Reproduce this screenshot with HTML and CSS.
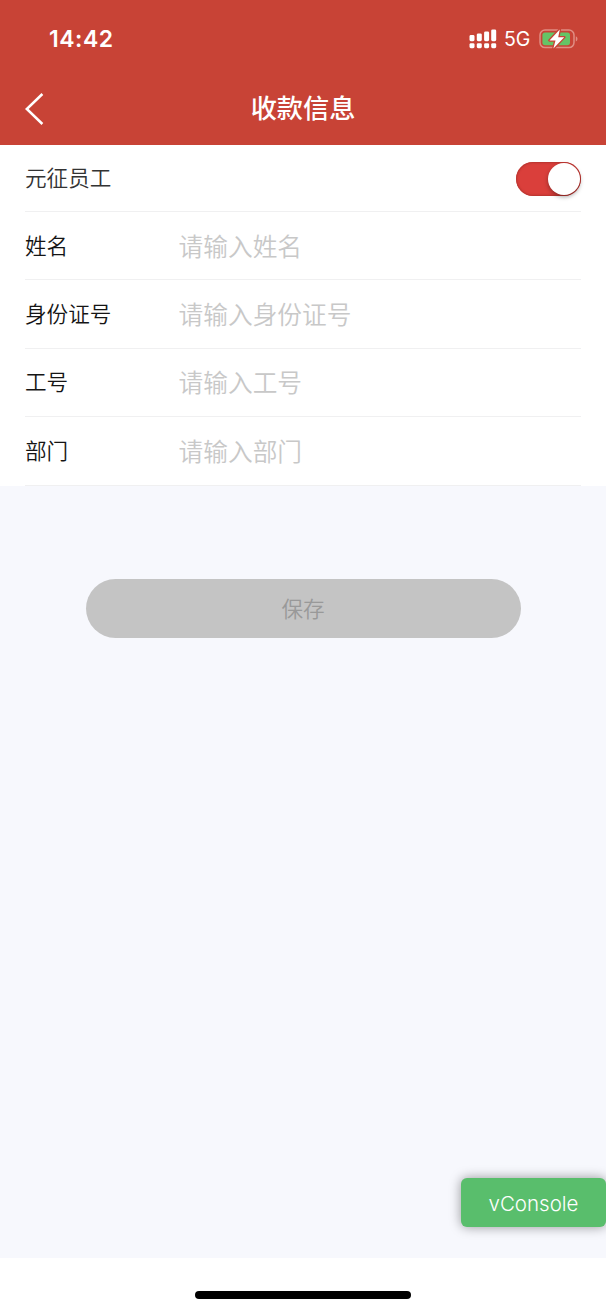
FILE: index.html
```html
<!DOCTYPE html>
<html lang="zh-CN">
<head>
    <meta charset="UTF-8">
    <meta name="viewport" content="width=device-width, initial-scale=1.0">
    <title>收款信息</title>
    <link rel="stylesheet" href="styles.css">
</head>
<body>

    <header class="header">
        <div class="status-bar">
            <span class="time">14:42</span>
            <div class="status-icons">
                <svg class="signal" width="28" height="20" viewBox="0 0 28 20" fill="#fff">
                    <rect x="0.5" y="6" width="5" height="6.2" rx="1.4"/>
                    <rect x="7.8" y="4.4" width="5" height="7.8" rx="1.4"/>
                    <rect x="15.1" y="2.4" width="5" height="9.8" rx="1.4"/>
                    <rect x="22.2" y="0.4" width="5" height="11.8" rx="1.4"/>
                    <rect x="0.5" y="14.2" width="5" height="5" rx="1.4"/>
                    <rect x="7.8" y="14.2" width="5" height="5" rx="1.4"/>
                    <rect x="15.1" y="14.2" width="5" height="5" rx="1.4"/>
                    <rect x="22.2" y="14.2" width="5" height="5" rx="1.4"/>
                </svg>
                <span class="network">5G</span>
                <svg class="battery" width="40" height="22" viewBox="0 0 40 22">
                    <rect x="1" y="2" width="34" height="17.6" rx="5" fill="none" stroke="#e08d83" stroke-width="1.5"/>
                    <path d="M36.8 8.2c2.2.8 2.2 4.4 0 5.2z" fill="#e08d83"/>
                    <rect x="3.4" y="4.4" width="27.6" height="12.8" rx="2.6" fill="#65c466"/>
                    <path d="M20.8 1.5L10.5 12.4h6L14.4 20.6 25.2 9.2h-6z" fill="#fff" stroke="#c84336" stroke-width="2.6" stroke-linejoin="round" paint-order="stroke"/>
                </svg>
            </div>
        </div>
        <div class="nav-bar">
            <button class="back-btn" aria-label="返回">
                <svg width="20" height="34" viewBox="0 0 20 34" fill="none" stroke="#fff" stroke-width="2.5">
                    <path d="M18.4 2L2.8 17 18.4 32"/>
                </svg>
            </button>
            <h1>收款信息</h1>
        </div>
    </header>

    <main class="content">
        <form class="form">
            <div class="row row-switch">
                <span class="label">元征员工</span>
                <label class="switch">
                    <input type="checkbox" checked aria-label="元征员工">
                    <span class="knob"></span>
                </label>
            </div>
            <div class="row">
                <label class="label" for="name">姓名</label>
                <input class="field" type="text" id="name" placeholder="请输入姓名">
            </div>
            <div class="row">
                <label class="label" for="idCard">身份证号</label>
                <input class="field" type="text" id="idCard" placeholder="请输入身份证号">
            </div>
            <div class="row">
                <label class="label" for="jobNumber">工号</label>
                <input class="field" type="text" id="jobNumber" placeholder="请输入工号">
            </div>
            <div class="row">
                <label class="label" for="department">部门</label>
                <input class="field" type="text" id="department" placeholder="请输入部门">
            </div>
        </form>

        <button class="save-btn" disabled>保存</button>
    </main>

    <footer class="home-area">
        <div class="home-indicator"></div>
    </footer>

    <button class="vconsole-btn">vConsole</button>

</body>
</html>
```
FILE: styles.css
```css
* {
    box-sizing: border-box;
}

body {
    display: flex;
    flex-direction: column;
    height: 1311px;
    margin: 0;
    overflow: hidden;
    font-family: Inter, "Noto Sans CJK SC", sans-serif;
    background-color: #ffffff;
    color: #151515;
}

button,
input {
    font-family: inherit;
}

.header {
    height: 144.5px;
    background-color: #c84336;
    color: #ffffff;
}

.status-bar {
    display: flex;
    align-items: center;
    justify-content: space-between;
    height: 77px;
    padding: 0 27px 0 49px;
}

.time {
    font-size: 23px;
    font-weight: 600;
    letter-spacing: 0.5px;
}

.status-icons {
    display: flex;
    align-items: center;
}

.network {
    margin: 1px 9px 0 7px;
    font-size: 19.5px;
    letter-spacing: -0.2px;
}

.nav-bar {
    display: grid;
    grid-template-columns: 60px 1fr 60px;
    align-items: center;
    height: 63px;
}

.back-btn {
    display: flex;
    padding: 0 0 0 24px;
    border: none;
    background: none;
}

h1 {
    margin: 0;
    font-size: 26.2px;
    font-weight: 500;
    line-height: 36px;
    text-align: center;
}

.content {
    flex: 1;
    background-color: #f7f8fd;
}

.form {
    padding: 0 25px;
    background-color: #ffffff;
}

.row {
    display: flex;
    align-items: center;
    height: 68.4px;
    border-bottom: 1px solid #f0f0f1;
}

.row-switch {
    justify-content: space-between;
    height: 67.5px;
    color: #333333;
}

.label {
    width: 153.6px;
    font-size: 21.6px;
    font-weight: 350;
    line-height: 32px;
}

.field {
    flex: 1;
    min-width: 0;
    margin-top: 2px;
    padding: 0;
    border: none;
    outline: none;
    background: none;
    font-size: 24.7px;
    font-weight: 350;
}

.field::placeholder {
    color: #c8c8c8;
}

.switch {
    display: flex;
    justify-content: flex-end;
    width: 65px;
    height: 34px;
    margin-top: 2px;
    padding: 1px;
    border-radius: 17px;
    background-color: #da3f3b;
    box-shadow: inset 0 0 2px 1px #b5342f;
}

.switch input {
    display: none;
}

.knob {
    width: 32px;
    height: 32px;
    border-radius: 50%;
    background-color: #ffffff;
    box-shadow: 0 2px 4px rgba(0, 0, 0, 0.35);
}

.save-btn {
    display: block;
    width: 435px;
    height: 59px;
    margin: 93.4px auto 0;
    padding: 0 0 1px;
    border: none;
    border-radius: 30px;
    background-color: #c4c4c4;
    color: #999999;
    font-size: 21.6px;
    font-weight: 350;
}

.home-area {
    display: flex;
    justify-content: center;
    height: 53px;
    padding-top: 33px;
}

.home-indicator {
    width: 216px;
    height: 8px;
    border-radius: 4px;
    background-color: #000000;
}

/* debug button floating over the page */
.vconsole-btn {
    position: absolute;
    right: 0;
    bottom: 84px;
    width: 145px;
    height: 49px;
    padding: 2px 0 0;
    border: none;
    border-radius: 6px;
    background-color: #59be6c;
    box-shadow: 0 0 12px rgba(0, 0, 0, 0.4);
    color: #ffffff;
    font-size: 20.5px;
    font-weight: 350;
}
```
